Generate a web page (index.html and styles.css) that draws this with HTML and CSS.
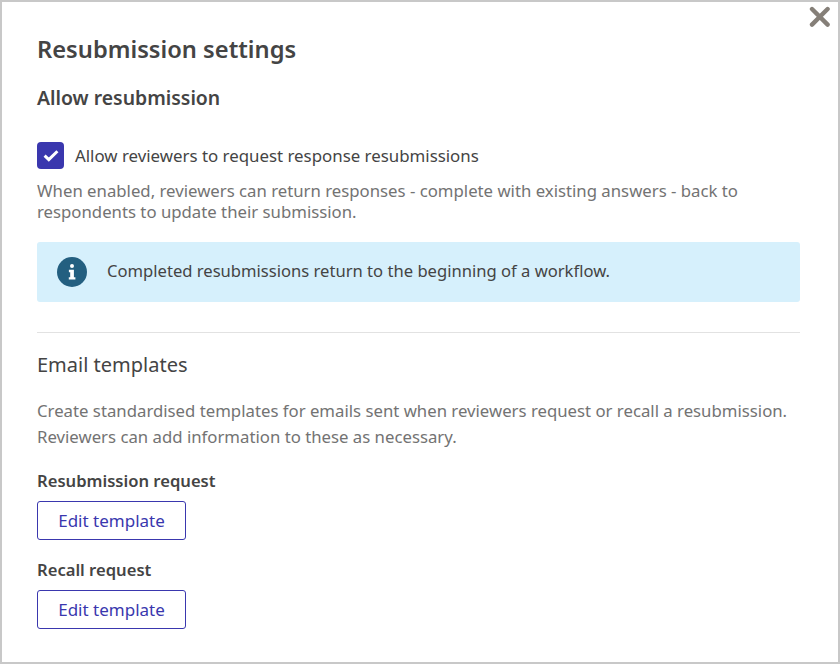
FILE: index.html
```html
<!DOCTYPE html>
<html lang="en">
<head>
<meta charset="utf-8">
<title>Resubmission settings</title>
<link rel="stylesheet" href="styles.css">
</head>
<body>
<div class="modal">
  <button class="close" aria-label="Close">
    <svg viewBox="0 0 22 22" width="22" height="22"><path d="M3 3L18.6 18.6M18.6 3L3 18.6" stroke="#857f78" stroke-width="4.4" stroke-linecap="round" fill="none"/></svg>
  </button>
  <h1 class="title">Resubmission settings</h1>
  <h2 class="subtitle">Allow resubmission</h2>
  <label class="check-row">
    <span class="checkbox">
      <svg viewBox="0 0 16 13" width="16" height="13"><path d="M1.6 6.6L5.8 10.6L14.4 2.2" stroke="#fff" stroke-width="3" fill="none"/></svg>
    </span>
    <span class="check-label">Allow reviewers to request response resubmissions</span>
  </label>
  <p class="help help-tight">When enabled, reviewers can return responses - complete with existing answers - back to respondents to update their submission.</p>
  <div class="notice">
    <svg class="notice-icon" viewBox="0 0 30 30" width="30" height="30"><circle cx="15" cy="15" r="15" fill="#235f80"/><path d="M15 7a2 2 0 1 1 0 4a2 2 0 0 1 0-4zM11.9 12.8h5v7.4h1.5v2.4h-6.6v-2.4h1.4v-5h-1.3z" fill="#fff"/></svg>
    <span class="notice-text">Completed resubmissions return to the beginning of a workflow.</span>
  </div>
  <hr class="rule">
  <h2 class="section">Email templates</h2>
  <p class="help help-loose">Create standardised templates for emails sent when reviewers request or recall a resubmission. Reviewers can add information to these as necessary.</p>
  <h3 class="label first">Resubmission request</h3>
  <button class="btn">Edit template</button>
  <h3 class="label">Recall request</h3>
  <button class="btn">Edit template</button>
</div>
</body>
</html>
```
FILE: styles.css
```css
* { box-sizing: border-box; }
html, body { margin: 0; padding: 0; }
body {
  font-family: "Noto Sans", "Open Sans", sans-serif;
  color: #444;
  background: #fff;
}
.modal {
  position: relative;
  width: 840px;
  height: 664px;
  border: 2px solid #c8c8c8;
  padding: 32px 38px 0 35px;
  overflow: hidden;
}
.close {
  position: absolute;
  top: 4px;
  right: 7px;
  width: 22px;
  height: 22px;
  padding: 0;
  border: 0;
  background: none;
}
.close svg { display: block; }
.title { margin: 0; font-size: 23.7px; line-height: 30px; font-weight: 600; }
.subtitle { margin: 21px 0 0; font-size: 19.4px; line-height: 26px; font-weight: 600; }
.check-row { display: flex; align-items: center; gap: 11px; margin-top: 31px; }
.checkbox {
  width: 27px;
  height: 27px;
  border-radius: 4px;
  background: #3a37ae;
  display: flex;
  align-items: center;
  justify-content: center;
}
.check-label { font-size: 16.85px; line-height: 27px; }
.help { margin: 0; font-size: 16.75px; color: #737373; }
.help-tight { margin-top: 11px; line-height: 21px; }
.help-loose { margin-top: 20px; line-height: 26px; }
.notice {
  display: flex;
  align-items: center;
  gap: 20px;
  height: 60px;
  margin-top: 20px;
  padding-left: 20px;
  background: #d6f0fc;
  border-radius: 3px;
  font-size: 16.6px;
}
.notice-icon { flex: none; }
.notice-text { margin-top: -3px; }
.rule { margin: 30px 0 0; border: 0; border-top: 1px solid #e2e2e2; }
.section { margin: 19px 0 0; font-size: 20px; line-height: 26px; font-weight: 400; }
.label { margin: 17.6px 0 0; font-size: 16.6px; line-height: 24px; font-weight: 600; }
.label.first { margin-top: 18.7px; }
.btn {
  display: block;
  width: 149px;
  height: 39.5px;
  margin-top: 8px;
  padding: 0;
  border: 1px solid #3a37ae;
  border-radius: 3px;
  background: #fff;
  color: #3a37ae;
  font-family: inherit;
  font-size: 17px;
}
```
